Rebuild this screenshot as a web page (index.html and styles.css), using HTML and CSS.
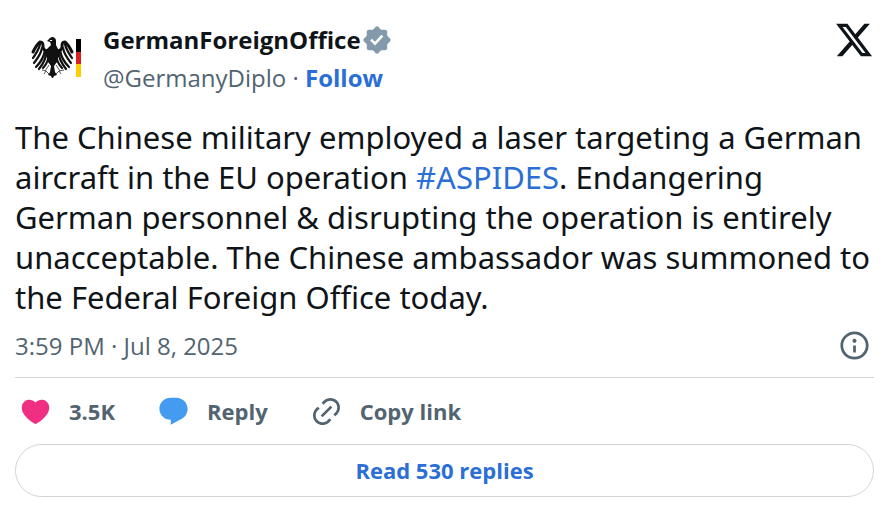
FILE: index.html
```html
<!DOCTYPE html>
<html lang="en">
<head>
    <meta charset="UTF-8">
    <meta name="viewport" content="width=device-width, initial-scale=1.0">
    <title>GermanForeignOffice on X</title>
    <link rel="stylesheet" href="styles.css">
</head>
<body>
    <article class="tweet">
        <header class="tweet-header">
            <svg class="avatar" viewBox="0 0 80 80" aria-hidden="true">
                <!-- wings -->
                <g id="wing" fill="none" stroke="#111" stroke-linecap="round">
                    <path stroke-width="3" d="M35 31c-5 0-7-2-7-4 0-3 0-5-3-5-3 2-5 6-7 10"/>
                    <path stroke-width="2.2" d="M25 24c-1 6-4 9-7 14M27 28c-1 6-4 10-8 15M30 30c-1 7-4 12-9 17M32 31c-1 8-4 13-8 18M34 32c0 7-2 12-6 16"/>
                </g>
                <use href="#wing" transform="matrix(-1 0 0 1 75 0)"/>
                <!-- head, body and tail -->
                <path fill="#111" d="M32 21l3-3c2-2 5-1 6 2v5l2 4 1 4-2 9-3 4 1 6 2 3-3 1-1 2h-1l-1-2-3-1 2-3 1-6-3-4-2-9 1-4 4-4-1-3z"/>
                <path fill="#fff" d="M35 20h2v1h-2z"/>
                <path fill="none" stroke="#555" stroke-width="1" d="M34 45l-4 6m-3-1l4 1-2 3m2-3l3 3m7-9l4 6m4-1l-5 1 2 3m-2-3l-3 3"/>
                <!-- flag bar -->
                <path fill="#000" d="M61 19h5v13h-5z"/>
                <path fill="#d8201c" d="M61 32h5v12h-5z"/>
                <path fill="#fc0" d="M61 44h5v13h-5z"/>
            </svg>
            <div class="author">
                <div class="author-name">
                    <a href="#">GermanForeignOffice</a>
                    <svg class="badge" viewBox="0 0 22 22" role="img" aria-label="Verified account"><path d="M12.05 2.056c-.568-.608-1.532-.608-2.1 0l-1.393 1.49c-.284.303-.685.47-1.1.455L5.42 3.932c-.832-.028-1.514.654-1.486 1.486l.069 2.039c.014.415-.152.816-.456 1.1l-1.49 1.392c-.608.568-.608 1.533 0 2.101l1.49 1.393c.304.284.47.684.456 1.1l-.07 2.038c-.027.832.655 1.514 1.487 1.486l2.038-.069c.415-.014.816.152 1.1.455l1.392 1.49c.569.609 1.533.609 2.102 0l1.393-1.49c.283-.303.684-.47 1.099-.455l2.038.069c.832.028 1.515-.654 1.486-1.486L18 14.542c-.015-.415.152-.815.455-1.099l1.49-1.393c.608-.568.608-1.533 0-2.101l-1.49-1.393c-.303-.283-.47-.684-.455-1.1l.068-2.038c.029-.832-.654-1.514-1.486-1.486l-2.038.07c-.415.013-.816-.153-1.1-.456zm-5.817 9.367l1.293-1.302 2.072 2.072 4.4-4.794 1.347 1.246-5.683 6.206z"/></svg>
                </div>
                <div class="author-handle">
                    <a href="#">@GermanyDiplo</a> · <a class="follow" href="#">Follow</a>
                </div>
            </div>
            <a class="x-logo" href="#" aria-label="View on X">
                <svg viewBox="0 0 24 24"><path d="M18.244 2.25h3.308l-7.227 8.26 8.502 11.24H16.17l-5.214-6.817L4.99 21.75H1.68l7.73-8.835L1.254 2.25H8.08l4.713 6.231zm-1.161 17.52h1.833L7.084 4.126H5.117z"/></svg>
            </a>
        </header>

        <p class="tweet-text">The Chinese military employed a laser targeting a German aircraft in the EU operation <a href="#">#ASPIDES</a>. Endangering German personnel &amp; disrupting the operation is entirely unacceptable. The Chinese ambassador was summoned to the Federal Foreign Office today.</p>

        <div class="tweet-meta">
            <a href="#"><time datetime="2025-07-08T15:59">3:59 PM · Jul 8, 2025</time></a>
            <a href="#" aria-label="Ads info and privacy">
                <svg class="icon" viewBox="0 0 24 24"><path d="M13.5 8.5c0 .83-.67 1.5-1.5 1.5s-1.5-.67-1.5-1.5S11.17 7 12 7s1.5.67 1.5 1.5zM13 17v-5h-2v5h2zm-1 5.25c5.66 0 10.25-4.59 10.25-10.25S17.66 1.75 12 1.75 1.75 6.34 1.75 12 6.34 22.25 12 22.25zM20.25 12c0 4.56-3.69 8.25-8.25 8.25S3.75 16.56 3.75 12 7.44 3.75 12 3.75s8.25 3.69 8.25 8.25z"/></svg>
            </a>
        </div>

        <div class="actions">
            <button type="button" class="action">
                <svg class="icon like" viewBox="0 0 24 24"><path d="M20.884 13.19c-1.351 2.48-4.001 5.12-8.379 7.67l-.503.3-.504-.3c-4.379-2.55-7.029-5.19-8.382-7.67-1.36-2.5-1.41-4.86-.514-6.67.887-1.79 2.647-2.91 4.601-3.01 1.651-.09 3.368.56 4.798 2.01 1.429-1.45 3.146-2.1 4.796-2.01 1.954.1 3.714 1.22 4.601 3.01.896 1.81.846 4.17-.514 6.67z"/></svg>
                3.5K
            </button>
            <button type="button" class="action">
                <svg class="icon reply" viewBox="0 0 24 24"><path d="M1.751 10c0-4.42 3.584-8 8.005-8h4.366c4.49 0 8.129 3.64 8.129 8.13 0 2.96-1.607 5.68-4.196 7.11l-8.054 4.46v-3.69h-.067c-4.49.1-8.183-3.51-8.183-8.01z"/></svg>
                Reply
            </button>
            <button type="button" class="action">
                <svg class="icon" viewBox="0 0 24 24"><path d="M18.36 5.64c-1.95-1.96-5.11-1.96-7.07 0L9.88 7.05 8.46 5.64l1.42-1.42c2.73-2.73 7.16-2.73 9.9 0 2.73 2.74 2.73 7.17 0 9.9l-1.42 1.42-1.41-1.42 1.41-1.41c1.96-1.96 1.96-5.12 0-7.07zm-2.12 3.53l-7.07 7.07-1.41-1.41 7.07-7.07 1.41 1.41zm-12.02.71l1.42-1.42 1.41 1.42-1.41 1.41c-1.96 1.96-1.96 5.12 0 7.07 1.95 1.96 5.11 1.96 7.07 0l1.41-1.41 1.42 1.41-1.42 1.42c-2.73 2.73-7.16 2.73-9.9 0-2.73-2.74-2.73-7.17 0-9.9z"/></svg>
                Copy link
            </button>
        </div>

        <a class="replies" href="#">Read 530 replies</a>
    </article>
</body>
</html>
```
FILE: styles.css
```css
* {
    box-sizing: border-box;
}
body {
    margin: 0;
    background: #fff;
    color: #0f1419;
    font-family: "Segoe UI", "Open Sans", "Noto Sans", sans-serif;
    font-size: 24px;
}
a {
    color: inherit;
    text-decoration: none;
}
svg {
    display: block;
    flex: none;
    fill: currentColor;
}
.tweet {
    padding: 20px 20px 20px 15px;
}
.tweet-header {
    display: flex;
    align-items: flex-start;
    gap: 8px;
}
.avatar {
    width: 80px;
    height: 80px;
}
.author {
    flex: 1;
    padding-top: 1px;
    line-height: 38px;
}
.author-name {
    display: flex;
    align-items: center;
    font-weight: 700;
}
.badge {
    width: 32px;
    height: 32px;
    color: #829aab;
}
.author-handle {
    color: #536471;
}
.follow {
    color: #2b6fd6;
    font-weight: 700;
}
.x-logo svg {
    width: 40px;
    height: 40px;
}
.tweet-text {
    margin: 17px 0 0;
    font-family: "Segoe UI", "Noto Sans", sans-serif;
    font-size: 31px;
    line-height: 40px;
}
.tweet-text a {
    color: #2b6fd6;
}
.tweet-meta {
    display: flex;
    align-items: center;
    justify-content: space-between;
    height: 61px;
    padding: 0 3px 4px 0;
    border-bottom: 1px solid #cfd5d9;
    color: #536471;
}
.icon {
    width: 33px;
    height: 33px;
}
.actions {
    display: flex;
    gap: 42px;
    padding: 17px 4px 16px;
}
.action {
    display: flex;
    align-items: center;
    gap: 17px;
    padding: 0;
    border: none;
    background: none;
    color: #536471;
    font: inherit;
    font-size: 22px;
    font-weight: 700;
    line-height: 33px;
    cursor: pointer;
}
.like {
    color: #f02e82;
}
.reply {
    color: #459bf0;
}
.replies {
    display: block;
    border: 1px solid #cfd5d9;
    border-radius: 27px;
    color: #2b6fd6;
    font-size: 22px;
    font-weight: 700;
    line-height: 51px;
    text-align: center;
}
```
